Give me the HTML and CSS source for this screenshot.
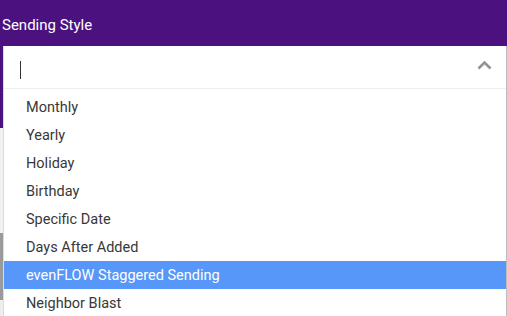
FILE: index.html
```html
<!DOCTYPE html>
<html lang="en">

<head>
    <meta charset="UTF-8">
    <meta name="viewport" content="width=device-width, initial-scale=1.0">
    <title>Sending Style</title>
    <link rel="stylesheet" href="styles.css">
</head>

<body>
    <!-- 상단 타이틀 바 -->
    <div class="topbar">
        <h1 class="ttl">Sending Style</h1>
    </div>

    <div class="main">
        <!-- 뒤쪽 페이지 가장자리 -->
        <div class="edge"></div>

        <!-- 드롭다운 박스 -->
        <div class="dropdown">
            <div class="sel">
                <span class="caret"></span>
                <svg class="arrow" width="15" height="10" viewBox="0 0 15 10">
                    <polyline points="1.5,8.5 7.5,2.5 13.5,8.5" fill="none" stroke="#939393" stroke-width="2.6" />
                </svg>
            </div>
            <ul class="opts">
                <li>Monthly</li>
                <li>Yearly</li>
                <li>Holiday</li>
                <li>Birthday</li>
                <li>Specific Date</li>
                <li>Days After Added</li>
                <li class="on">evenFLOW Staggered Sending</li>
                <li>Neighbor Blast</li>
            </ul>
        </div>
    </div>
</body>

</html>
```

FILE: styles.css
```css
html,
body {
    margin: 0;
    padding: 0;
}

body {
    width: 507px;
    height: 316px;
    overflow: hidden;
    background: #fff;
    font-family: Roboto, "Liberation Sans", sans-serif;
}

/* 상단 보라색 바 */
.topbar {
    height: 46px;
    background: #4b117f;
}

.ttl {
    margin: 0;
    padding: 5px 0 0 2px;
    font-size: 15px;
    font-weight: 400;
    line-height: 41px;
    color: #fff;
}

.main {
    display: flex;
    height: 270px;
}

/* 왼쪽 뒤 배경 조각 */
.edge {
    width: 3px;
    background: linear-gradient(#4b117f 0 82px, #f1f1f1 82px 187px, #9a9a9a 187px 254px, #eee 254px);
}

/* 드롭다운 */
.dropdown {
    flex: 1;
    border-left: 1px solid #dcdcdc;
    border-right: 1px solid #bdbdbd;
}

.sel {
    display: flex;
    align-items: flex-start;
    justify-content: space-between;
    height: 42px;
    padding: 0 14px 0 16px;
    border-bottom: 1px solid #efefef;
}

.caret {
    width: 1px;
    height: 18px;
    margin-top: 15px;
    background: #333;
}

.arrow {
    display: block;
    margin-top: 14px;
}

.opts {
    list-style: none;
    margin: 0;
    padding: 4px 0 0;
}

.opts li {
    height: 27px;
    padding: 1px 0 0 22px;
    font-size: 14.5px;
    line-height: 28px;
    color: #383838;
}

/* 선택된 항목 */
.opts li.on {
    background: #5897fa;
    color: #fff;
}
```
